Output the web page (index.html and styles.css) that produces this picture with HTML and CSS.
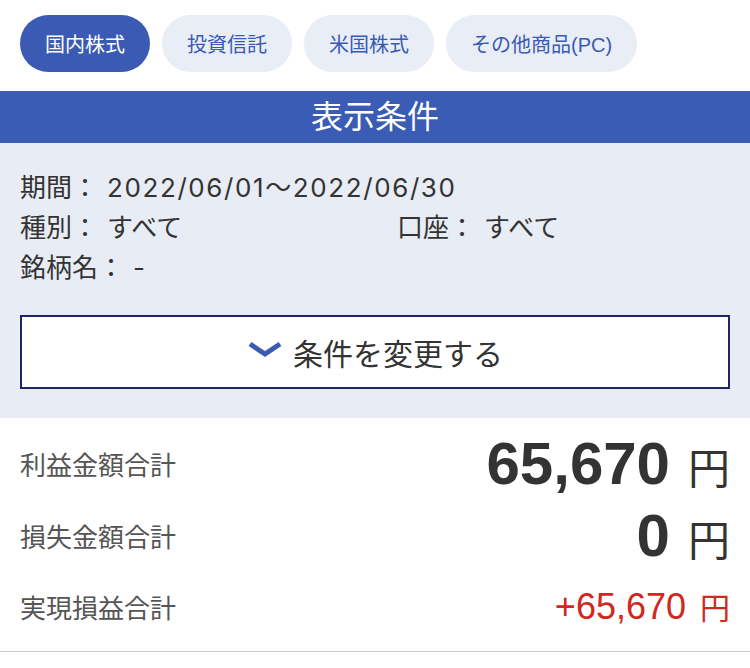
FILE: index.html
```html
<!DOCTYPE html>
<html lang="ja">

<head>
  <meta charset="UTF-8">
  <meta name="viewport" content="width=device-width, initial-scale=1.0">
  <title>実現損益</title>
  <link rel="stylesheet" href="styles.css">
</head>

<body>
  <nav class="tabs">
    <a class="tab active">国内株式</a>
    <a class="tab">投資信託</a>
    <a class="tab">米国株式</a>
    <a class="tab">その他商品(PC)</a>
  </nav>

  <h2 class="bar">表示条件</h2>

  <section class="cond">
    <div class="cond-list">
      <div class="cond-row full"><span class="key">期間：</span><span class="date">2022/06/01〜2022/06/30</span></div>
      <div class="cond-row"><span class="key">種別：</span>すべて</div>
      <div class="cond-row"><span class="key">口座：</span>すべて</div>
      <div class="cond-row full"><span class="key">銘柄名：</span>-</div>
    </div>
    <button class="change">
      <svg class="chev" width="36" height="18" viewBox="0 0 36 18">
        <path d="M3 3 L18 13 L33 3" fill="none" stroke="#3a5ab4" stroke-width="5" stroke-linejoin="miter" />
      </svg>
      条件を変更する
    </button>
  </section>

  <section class="summary">
    <div class="sum-row">
      <span class="label">利益金額合計</span>
      <span class="val big">65,670<span class="yen">円</span></span>
    </div>
    <div class="sum-row">
      <span class="label">損失金額合計</span>
      <span class="val big">0<span class="yen">円</span></span>
    </div>
    <div class="sum-row">
      <span class="label">実現損益合計</span>
      <span class="val plus">+65,670<span class="yen">円</span></span>
    </div>
  </section>
</body>

</html>
```

FILE: styles.css
```css
body {
  margin: 0;
  font-family: 'Liberation Sans', 'Noto Sans CJK JP', sans-serif;
  color: #333;
  background: #fff;
}

.tabs {
  display: flex;
  gap: 12px;
  padding: 15px 20px 19px;
}

.tab {
  height: 57px;
  display: flex;
  align-items: center;
  padding: 0 25px;
  border-radius: 29px;
  background: #e9edf5;
  color: #3a5ab4;
  font-size: 20px;
}

.tab.active {
  background: #3a5ab4;
  color: #fff;
}

.bar {
  margin: 0;
  height: 52px;
  line-height: 52px;
  background: #3b5cb5;
  color: #fff;
  text-align: center;
  font-size: 32px;
  font-weight: normal;
}

.cond {
  background: #e8ecf4;
  padding: 25px 20px 29px;
}

.cond-list {
  display: grid;
  grid-template-columns: 377px 1fr;
  font-family: 'Inter', 'Noto Sans CJK JP', sans-serif;
  font-size: 26px;
  line-height: 40px;
  color: #333;
}

.cond-row.full {
  grid-column: 1 / 3;
}

.key {
  margin-right: 9px;
}

.date {
  letter-spacing: 1.6px;
}

.change {
  margin-top: 27px;
  width: 100%;
  height: 74px;
  border: 2px solid #1e2566;
  background: #fff;
  display: flex;
  align-items: center;
  justify-content: center;
  gap: 10px;
  font-family: inherit;
  font-size: 30px;
  color: #333;
}

.chev {
  margin-top: -4px;
}

.summary {
  padding: 9px 20px 10px;
  border-bottom: 1px solid #c8c8c8;
}

.sum-row {
  height: 72px;
  display: flex;
  align-items: center;
  justify-content: space-between;
}

.sum-row:last-child {
  height: 70px;
}

.label {
  font-size: 26px;
  color: #555;
}

.val {
  display: flex;
  align-items: baseline;
}

.big {
  font-size: 60px;
  font-weight: bold;
  color: #333;
}

.big .yen {
  font-size: 42px;
  font-weight: normal;
  margin-left: 18px;
}

.plus {
  font-size: 36px;
  color: #d0281e;
}

.plus .yen {
  font-size: 30px;
  margin-left: 14px;
}
```
